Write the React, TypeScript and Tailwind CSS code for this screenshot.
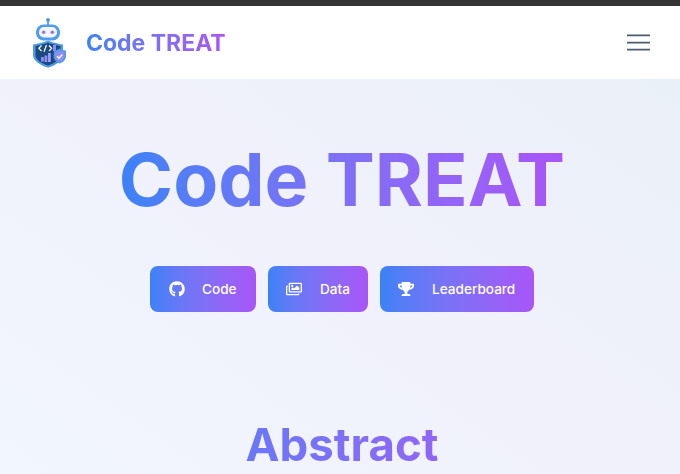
import { FaGithub, FaRegImages, FaTrophy } from 'react-icons/fa';

const Logo = () => (
  <svg width="34" height="50" viewBox="0 0 34 50">
    {/* antenna */}
    <circle cx="15" cy="2" r="1.9" fill="#4a95e6" />
    <rect x="14.2" y="3" width="1.6" height="4.5" fill="#4a95e6" />
    {/* head */}
    <rect x="3" y="6.5" width="24" height="16" rx="7.5" fill="#4f9dec" />
    <rect x="6" y="9" width="18" height="10.5" rx="5" fill="#f4f6ff" />
    <circle cx="10.7" cy="14.2" r="1.8" fill="#8b7cf6" />
    <circle cx="19.3" cy="14.2" r="1.8" fill="#8b7cf6" />
    {/* shield */}
    <path
      d="M0 26.5 C4 26 10 24.5 15 22.5 C20 24.5 26 26 30 26.5 L30 37 C30 43 22 47.5 15 49.8 C8 47.5 0 43 0 37 Z"
      fill="#4a9be8"
    />
    <path
      d="M2.5 28 C6 27.5 11 26 15 24.8 C19 26 24 27.5 27.5 28 L27.5 37 C27.5 42 21 45.5 15 47.5 C9 45.5 2.5 42 2.5 37 Z"
      fill="#1c4a80"
    />
    <path d="M8.5 27.5 L5.8 30.3 L8.5 33 M11 33.8 L13.5 27 M16 27.5 L18.7 30.3 L16 33" fill="none" stroke="#ffffff" strokeWidth="1.2" />
    <rect x="8" y="39" width="2.8" height="4.5" fill="#8f8cf0" />
    <rect x="11.5" y="37.5" width="2.8" height="6.5" fill="#8f8cf0" />
    <rect x="15" y="35" width="2.8" height="9" fill="#9d9af5" />
    <rect x="20" y="27" width="3" height="6" fill="#8f8cf0" />
    {/* badge */}
    <path d="M21 32.5 C23 32.5 25 31.5 26.5 30.5 C28 31.5 30 32.5 33 32.5 L33 38 C33 42 29.5 44.5 26.5 45.5 C23.5 44.5 20.5 42 20.5 38 Z" fill="#4a9be8" />
    <path d="M22.5 34 C24 34 25.5 33 26.5 32.5 C27.5 33 29 34 31.5 34 L31.5 38 C31.5 41 29 43 26.5 44 C24 43 22 41 22 38 Z" fill="#8f8cf0" />
    <path d="M24 38.2 L26 40.2 L29.3 36.5" fill="none" stroke="#ffffff" strokeWidth="1.3" />
  </svg>
);

const Hamburger = () => (
  <svg width="23" height="17" viewBox="0 0 23 17">
    <path d="M0 1.4H23M0 8.6H23M0 15.6H23" stroke="#4b5b70" strokeWidth="1.8" fill="none" />
  </svg>
);

const buttons = [
  { label: 'Code', icon: <FaGithub size={16} />, width: 'w-[106px]', pad: 'pl-[19px]', gap: 'gap-[17px]' },
  { label: 'Data', icon: <FaRegImages size={16} />, width: 'w-[100px]', pad: 'pl-[18px]', gap: 'gap-[18px]' },
  { label: 'Leaderboard', icon: <FaTrophy size={16} />, width: 'w-[154px]', pad: 'pl-[18px]', gap: 'gap-[18px]' },
];

export default function App() {
  return (
    <div className="h-[474px] overflow-hidden bg-gradient-to-bl from-[#e9f0f8] via-[#f0f1fb] to-[#f2f6fe] font-['Inter',sans-serif]">
      <div className="h-[6px] bg-[#333333]" />

      {/* Navbar */}
      <nav className="h-[73px] bg-white flex items-center justify-between pl-[33px] pr-[30px]">
        <div className="flex items-center gap-[19px]">
          <Logo />
          <span className="pt-[2px] text-[23px] font-bold bg-gradient-to-r from-[#3b82f6] to-[#a855f7] bg-clip-text text-transparent">
            Code TREAT
          </span>
        </div>
        <button className="flex">
          <Hamburger />
        </button>
      </nav>

      {/* Hero */}
      <section className="flex flex-col items-center pt-[56px] pl-[4px]">
        <h1 className="text-[73.5px] leading-[90px] font-bold bg-gradient-to-r from-[#3b82f6] to-[#a855f7] bg-clip-text text-transparent">
          Code TREAT
        </h1>
        <div className="flex gap-3 mt-[41px]">
          {buttons.map((b) => (
            <a
              key={b.label}
              href="#"
              className={`${b.width} ${b.pad} ${b.gap} h-[46px] flex items-center rounded-lg bg-gradient-to-r from-[#3b82f6] to-[#a855f7] text-white text-[13.6px] font-medium`}
            >
              {b.icon}
              {b.label}
            </a>
          ))}
        </div>
        <h2 className="w-[480px] mt-[103px] text-center text-[45.6px] leading-[60px] font-bold bg-gradient-to-r from-[#3b82f6] to-[#a855f7] bg-clip-text text-transparent">
          Abstract
        </h2>
      </section>
    </div>
  );
}
